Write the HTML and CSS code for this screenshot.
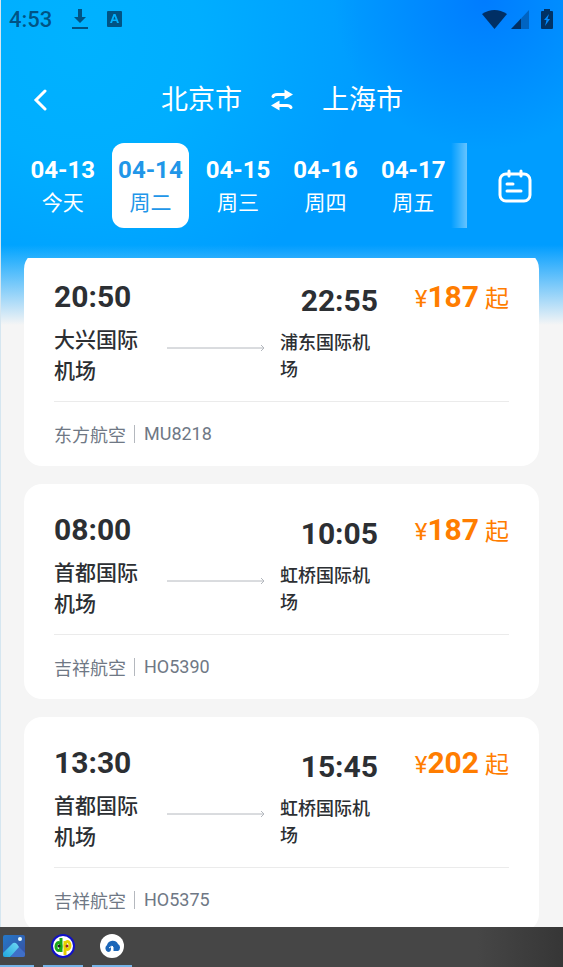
FILE: index.html
```html
<!DOCTYPE html>
<html lang="zh-CN">
<head>
<meta charset="utf-8">
<meta name="viewport" content="width=device-width, initial-scale=1">
<title>北京市 - 上海市</title>
<link rel="stylesheet" href="styles.css">
</head>
<body>
<div class="app">
  <div class="status">
    <span class="status-time">4:53</span>
    <svg class="status-download" width="16" height="22" viewBox="0 0 16 22"><path d="M6 1h4v8h4l-6 6-6-6h4z"/><path d="M0 19h16v2H0z"/></svg>
    <svg class="status-input" width="15" height="16" viewBox="0 0 15 16"><path fill-rule="evenodd" d="M1 0h13q1 0 1 1v14q0 1-1 1H1q-1 0-1-1V1q0-1 1-1zM6.500 3L3 12h2l.7-2h3.600l.7 2h2L8.500 3zM7.500 5.200L8.700 8.500H6.300z"/></svg>
    <span class="status-right">
      <svg width="25" height="19" viewBox="0 0 25 19"><path d="M0 4Q12.500-4 25 4L12.500 19z"/></svg>
      <svg width="18" height="19" viewBox="0 0 18 19"><path opacity=".4" d="M10 8.500L18 0v19h-8z"/><path d="M10 8.500V19H0z"/></svg>
      <svg width="12" height="20" viewBox="0 0 12 20"><path fill-rule="evenodd" d="M3 0h6v2h2q1 0 1 1v16q0 1-1 1H1q-1 0-1-1V3q0-1 1-1h2zM8 5L3 11h2.500L4 17l5-7H6.500z"/></svg>
    </span>
  </div>

  <header class="topbar">
    <button class="icon-button back" type="button" aria-label="返回">
      <svg width="14" height="24" viewBox="0 0 14 24"><path d="M12 3L3 12l9 9"/></svg>
    </button>
    <h1 class="route">
      <span>北京市</span>
      <button class="icon-button" type="button" aria-label="交换">
        <svg class="swap" width="24" height="24" viewBox="0 0 24 24"><path class="line" d="M3 8.500Q4 6.500 7 6.500h9M21 19.500q-1-2-4-2H8"/><path d="M14.500 1.500l8.500 5-8.500 5zM9.500 12.500v10l-8.500-5z"/></svg>
      </button>
      <span>上海市</span>
    </h1>
  </header>

  <nav class="dates" aria-label="日期">
    <div class="date-strip">
      <button class="date" type="button"><b>04-13</b><span>今天</span></button>
      <button class="date selected" type="button"><b>04-14</b><span>周二</span></button>
      <button class="date" type="button"><b>04-15</b><span>周三</span></button>
      <button class="date" type="button"><b>04-16</b><span>周四</span></button>
      <button class="date" type="button"><b>04-17</b><span>周五</span></button>
    </div>
    <button class="icon-button calendar" type="button" aria-label="日历">
      <svg width="34" height="34" viewBox="0 0 34 34"><rect x="2" y="5" width="30" height="27" rx="6"/><path d="M11 2v5M23 2v5M9 15h6M9 22h14"/></svg>
    </button>
  </nav>

  <main class="results">
    <ul class="flights">
      <li class="flight">
        <div class="trip">
          <div class="from"><time>20:50</time><p>大兴国际机场</p></div>
          <svg class="arrow" viewBox="0 0 98 8" preserveAspectRatio="xMaxYMid slice"><path d="M0 4h97M94 1l3 3-3 3"/></svg>
          <div class="to"><time>22:55</time><p>浦东国际机场</p></div>
          <div class="price">¥<b>187</b> 起</div>
        </div>
        <div class="carrier"><span>东方航空</span><span class="number">MU8218</span></div>
      </li>
      <li class="flight">
        <div class="trip">
          <div class="from"><time>08:00</time><p>首都国际机场</p></div>
          <svg class="arrow" viewBox="0 0 98 8" preserveAspectRatio="xMaxYMid slice"><path d="M0 4h97M94 1l3 3-3 3"/></svg>
          <div class="to"><time>10:05</time><p>虹桥国际机场</p></div>
          <div class="price">¥<b>187</b> 起</div>
        </div>
        <div class="carrier"><span>吉祥航空</span><span class="number">HO5390</span></div>
      </li>
      <li class="flight">
        <div class="trip">
          <div class="from"><time>13:30</time><p>首都国际机场</p></div>
          <svg class="arrow" viewBox="0 0 98 8" preserveAspectRatio="xMaxYMid slice"><path d="M0 4h97M94 1l3 3-3 3"/></svg>
          <div class="to"><time>15:45</time><p>虹桥国际机场</p></div>
          <div class="price">¥<b>202</b> 起</div>
        </div>
        <div class="carrier"><span>吉祥航空</span><span class="number">HO5375</span></div>
      </li>
    </ul>
  </main>
</div>

<footer class="taskbar">
  <button class="task" type="button" aria-label="照片">
    <svg width="24" height="24" viewBox="0 0 24 24">
      <defs>
        <linearGradient id="sky" x1="0" y1="0" x2="1" y2="1"><stop offset="0" stop-color="#2478c8"/><stop offset="1" stop-color="#3a4fa0"/></linearGradient>
        <linearGradient id="hill" x1="0" y1="1" x2="1" y2="0"><stop offset="0" stop-color="#1fa6dc"/><stop offset="1" stop-color="#6fd8f4"/></linearGradient>
      </defs>
      <rect x="1" y="1" width="22" height="22" rx="2" fill="url(#sky)"/>
      <path d="M9 23l5-13 9 9v2q0 2-2 2z" fill="#3f6fc8"/>
      <path d="M1 19L11 9q2-1 4 1l2 3-9 10H3q-2 0-2-2z" fill="url(#hill)"/>
      <circle cx="18" cy="5" r="2" fill="#e6fbff"/>
    </svg>
  </button>
  <button class="task" type="button" aria-label="dp">
    <svg width="24" height="24" viewBox="0 0 24 24">
      <circle cx="12" cy="12" r="11" fill="#fff" stroke="#1010c8" stroke-width="2"/>
      <g fill="none" stroke-width="3"><path d="M10 4v14" stroke="#18a818"/><ellipse cx="7.500" cy="12.500" rx="2.500" ry="4" stroke="#18a818"/><path d="M14 7v14" stroke="#e8d000"/><ellipse cx="16.500" cy="11.500" rx="2.500" ry="4" stroke="#e8d000"/></g>
      <circle cx="8" cy="12" r="1.500" fill="#222"/><circle cx="16" cy="12" r="1.500" fill="#922"/>
    </svg>
  </button>
  <button class="task" type="button" aria-label="云盘">
    <svg width="24" height="24" viewBox="0 0 24 24">
      <circle cx="12" cy="12" r="12" fill="#fff"/>
      <path d="M8 18a4 4 0 0 1-1-7 6 6 0 0 1 11-1 4 4 0 0 1 0 7h-5v-4h-2v2q0 3-3 3z" fill="#1b66b8"/>
      <path d="M9 14l3-2 1 1v4" fill="none" stroke="#fff" stroke-width="1"/>
    </svg>
  </button>
</footer>
</body>
</html>
```
FILE: styles.css
```css
* {
  box-sizing: border-box;
}

body {
  display: flex;
  flex-direction: column;
  height: 100vh;
  margin: 0;
  overflow: hidden;
  color: #2c2f33;
  font-family: Roboto, "Noto Sans CJK SC", sans-serif;
}

button {
  padding: 0;
  border: 0;
  background: none;
  color: inherit;
  font: inherit;
}

svg {
  display: block;
}

.app {
  display: flex;
  flex: 1;
  flex-direction: column;
  min-height: 0;
  border-left: 1px solid #d5e6f0;
  background:
    linear-gradient(to bottom, rgba(245, 245, 245, 0) 245px, #f5f5f5 325px),
    radial-gradient(circle at 86% 0, #007cff 0, rgba(0, 128, 255, 0) 150px),
    radial-gradient(circle at 14% 40px, #00b2ff 0, #00aeff 120px, rgba(0, 160, 255, 0) 280px),
    #009dff;
}

.status {
  display: flex;
  align-items: center;
  height: 38px;
  padding: 0 10px 0 8px;
  color: rgba(0, 20, 50, 0.6);
  fill: currentColor;
}

.status-time {
  font-size: 22px;
  font-weight: 500;
}

.status-download {
  margin-left: 20px;
}

.status-input {
  margin-left: 19px;
}

.status-right {
  display: flex;
  align-items: center;
  gap: 4px;
  margin-left: auto;
  color: rgba(0, 20, 50, 0.75);
}

.status-right svg:last-child {
  margin-left: 8px;
}

.topbar {
  display: grid;
  grid-template-columns: 1fr auto 1fr;
  align-items: center;
  height: 105px;
  padding: 18px 32px 0;
  color: #fff;
}

.icon-button svg {
  fill: none;
  stroke: #fff;
  stroke-linecap: round;
  stroke-width: 3;
}

.back {
  justify-self: start;
}

.route {
  display: flex;
  align-items: center;
  gap: 28px;
  margin: 0;
  font-size: 27px;
  font-weight: 400;
  line-height: 40px;
}

.icon-button .swap {
  fill: #fff;
  stroke: none;
}

.swap .line {
  fill: none;
  stroke: #fff;
}

.dates {
  display: flex;
  align-items: center;
  padding: 0 31px 0 23px;
}

.date-strip {
  position: relative;
  display: grid;
  flex: 1;
  grid-template-columns: repeat(5, 1fr);
  gap: 10px;
  padding-right: 15px;
}

.date-strip::after {
  position: absolute;
  top: 0;
  right: 0;
  bottom: 0;
  width: 16px;
  background: linear-gradient(to right, rgba(255, 255, 255, 0), rgba(255, 255, 255, 0.4));
  content: "";
}

.date {
  display: flex;
  flex-direction: column;
  align-items: center;
  gap: 3px;
  padding: 12px 0 10px;
  border-radius: 12px;
  color: #fff;
  font-size: 21px;
  line-height: 30px;
}

.date b {
  font-size: 24px;
}

.date.selected {
  background: #fff;
  color: #2196e8;
}

.calendar {
  margin-left: 31px;
}

.results {
  flex: 1;
  min-height: 0;
  margin-top: 30px;
  overflow: hidden;
}

/* The list is scrolled slightly under the date bar. */
.flights {
  display: flex;
  flex-direction: column;
  gap: 18px;
  margin: -7px 24px 0 23px;
  padding: 0;
  list-style: none;
}

.flight {
  padding: 28px 30px 0;
  border-radius: 18px;
  background: #fff;
}

.trip {
  display: grid;
  grid-template-columns: repeat(3, minmax(0, 1fr)) 116px;
  column-gap: 15px;
  padding-bottom: 14px;
  border-bottom: 1px solid #ebebeb;
}

.trip time {
  display: block;
  margin-bottom: 10px;
  font-size: 30px;
  font-weight: 700;
  line-height: 36px;
}

.trip p {
  margin: 0;
  font-weight: 500;
}

.from p {
  max-width: 90px;
  font-size: 21px;
  line-height: 31px;
}

.arrow {
  width: 100%;
  height: 8px;
  margin-top: 65px;
  fill: none;
  stroke: #b4b8be;
}

.to {
  padding-top: 4px;
}

.to time {
  text-align: right;
}

.to p {
  font-size: 18px;
  line-height: 27px;
}

.price {
  color: #ff7d00;
  font-size: 24px;
  line-height: 36px;
  text-align: right;
  white-space: nowrap;
}

.price b {
  font-size: 30px;
}

.carrier {
  display: flex;
  align-items: center;
  height: 64px;
  color: #6f7885;
  font-size: 18px;
}

.number {
  margin-left: 8px;
  padding-left: 9px;
  border-left: 1px solid #b4b8be;
  line-height: 18px;
}

.taskbar {
  display: flex;
  gap: 9px;
  height: 40px;
  margin-left: -6px;
  background: linear-gradient(to right, #464646 85%, #363636);
}

.task {
  display: flex;
  align-items: center;
  justify-content: center;
  width: 40px;
  border-bottom: 2px solid #76b4e8;
}
```
